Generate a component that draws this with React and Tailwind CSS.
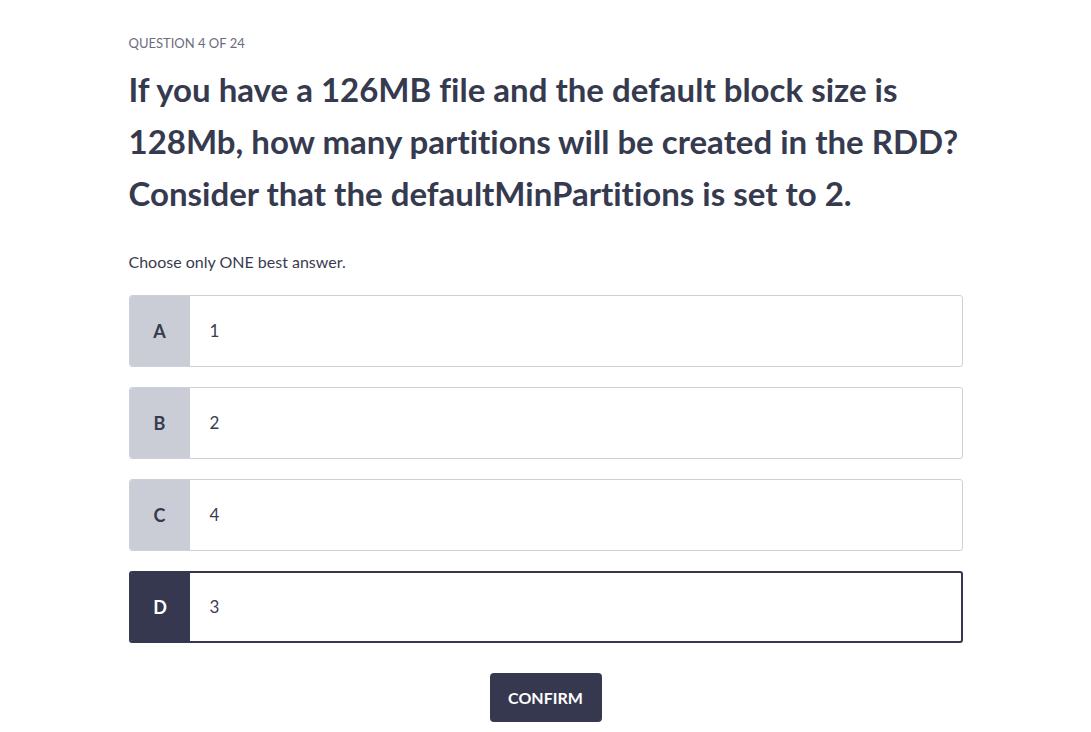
import { useState } from 'react'

const options = [
    { key: 'A', text: '1' },
    { key: 'B', text: '2' },
    { key: 'C', text: '4' },
    { key: 'D', text: '3' },
]

const App = () => {
    const [selected, setSelected] = useState('D')

    return (
        <div className="min-h-screen bg-white [font-variant-ligatures:none]" style={{ fontFamily: 'Lato, "Open Sans", sans-serif' }}>
            <div className="mx-auto w-[834px] pt-[35px]">
                <p className="text-[13px] leading-[16px] uppercase text-[#6b6e7e]">Question 4 of 24</p>

                <h1 className="mt-[12px] text-[33px] leading-[52px] font-bold text-[#363a4f]">
                    If you have a 126MB file and the default block size is 128Mb, how many partitions will be created in the RDD? Consider that the defaultMinPartitions is set to 2.
                </h1>

                <p className="mt-[33px] text-[16px] leading-[20px] text-[#393c4f]">Choose only ONE best answer.</p>

                <div className="mt-[23px] flex flex-col gap-[20px]">
                    {options.map((opt) => {
                        const active = opt.key === selected
                        return (
                            <button
                                key={opt.key}
                                onClick={() => setSelected(opt.key)}
                                className={
                                    active
                                        ? 'flex h-[72px] w-full items-stretch overflow-hidden rounded-[3px] border-2 border-[#363850] bg-white text-left'
                                        : 'flex h-[72px] w-full items-stretch overflow-hidden rounded-[3px] border border-[#cfd1d9] bg-white text-left'
                                }
                            >
                                <span
                                    className={
                                        active
                                            ? 'flex w-[59px] items-center justify-center bg-[#363850] text-[18px] font-bold text-white'
                                            : 'flex w-[60px] items-center justify-center bg-[#cbcdd6] text-[18px] font-bold text-[#363a4f]'
                                    }
                                >
                                    {opt.key}
                                </span>
                                <span className="flex items-center pl-[20px] text-[17px] text-[#3a3d50]">{opt.text}</span>
                            </button>
                        )
                    })}
                </div>

                <div className="mt-[30px] flex justify-center">
                    <button className="h-[49px] w-[112px] rounded-[4px] bg-[#363850] text-[16px] font-bold uppercase text-white">
                        Confirm
                    </button>
                </div>
            </div>
        </div>
    )
}

export default App
